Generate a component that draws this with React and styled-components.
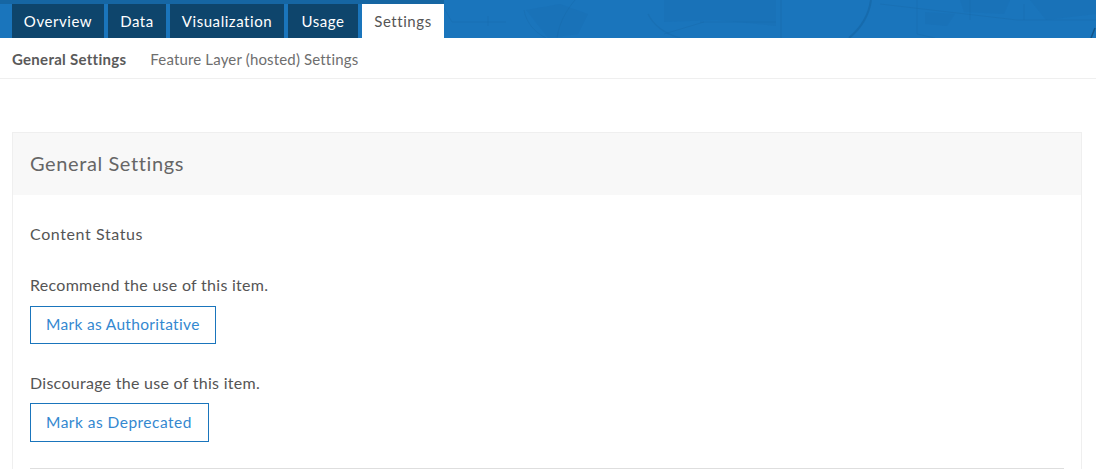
import React from "react";
import styled, { createGlobalStyle } from "styled-components";

const GlobalStyle = createGlobalStyle`
    html, body {
        margin: 0;
        padding: 0;
        background: #fff;
        overflow: hidden;
    }
    body {
        font-family: Lato, "Open Sans", sans-serif;
        color: #4c4c4c;
    }
`;

const Page = styled.div`
    width: 1096px;
    height: 476px;
    overflow: hidden;
`;

const Banner = styled.div`
    position: relative;
    height: 38px;
    background: #1a75bc;
    overflow: hidden;
`;

const BannerArt = styled.svg`
    position: absolute;
    top: 0;
    left: 0;
`;

const Tabs = styled.nav`
    position: relative;
    display: flex;
    gap: 4px;
    height: 38px;
    padding: 4px 0 0 12px;
    box-sizing: border-box;
`;

const Tab = styled.a`
    display: flex;
    align-items: center;
    justify-content: center;
    width: ${(props) => props.$width}px;
    font-size: 15px;
    letter-spacing: 0.55px;
    color: ${(props) => (props.$active ? "#555" : "#fff")};
    background: ${(props) => (props.$active ? "#fff" : "#0e456c")};
`;

const SubNav = styled.nav`
    display: flex;
    align-items: center;
    gap: 24px;
    height: 41px;
    padding: 1px 0 0 12px;
    box-sizing: border-box;
    border-bottom: 1px solid #efefef;
`;

const SubLink = styled.a`
    font-size: 15px;
    letter-spacing: ${(props) => (props.$active ? "0.28px" : "0.16px")};
    font-weight: ${(props) => (props.$active ? 700 : 400)};
    color: ${(props) => (props.$active ? "#5a5a5a" : "#6e6e6e")};
`;

const Card = styled.section`
    margin: 53px 14px 0 12px;
    border: 1px solid #efefef;
    border-bottom: 0;
`;

const CardHeader = styled.h2`
    margin: 0;
    height: 62px;
    padding: 0 0 2px 17px;
    box-sizing: border-box;
    display: flex;
    align-items: center;
    background: #f8f8f8;
    font-size: 20px;
    font-weight: 400;
    letter-spacing: 0.6px;
    color: #666;
`;

const CardBody = styled.div`
    padding: 28px 17px 0;
`;

const SectionTitle = styled.h3`
    margin: 0 0 29px;
    font-size: 16px;
    line-height: 22px;
    font-weight: 400;
    letter-spacing: 0.6px;
    color: #555;
`;

const StatusBlock = styled.div`
    margin-bottom: 28px;
    &:last-of-type {
        margin-bottom: 26px;
    }
`;

const Hint = styled.p`
    margin: 0 0 ${(props) => props.$gap}px;
    font-size: 16px;
    line-height: 22px;
    letter-spacing: 0.28px;
    color: #555;
`;

const OutlineButton = styled.button`
    display: block;
    width: ${(props) => props.$width}px;
    height: ${(props) => props.$height}px;
    padding: 0 0 2px 15px;
    text-align: left;
    background: #fff;
    border: 1px solid #1a75bc;
    border-radius: 0;
    font-family: inherit;
    font-size: 15.5px;
    letter-spacing: ${(props) => props.$spacing}px;
    color: #3488d0;
`;

const Divider = styled.hr`
    margin: 0;
    border: 0;
    border-top: 1px solid #dedede;
`;

const tabs = [
    { label: "Overview", width: 92 },
    { label: "Data", width: 58 },
    { label: "Visualization", width: 114 },
    { label: "Usage", width: 70 },
    { label: "Settings", width: 82, active: true },
];

const App = () => {
    return (
        <Page>
            <GlobalStyle />
            <Banner>
                <BannerArt width="1096" height="38" viewBox="0 0 1096 38" fill="none">
                    <path d="M0 0h444v4H0z" fill="#155f99" fillOpacity="0.7" />
                    <g fill="#176aab" fillOpacity="0.22">
                        <path d="M526 10l34-6 28 10-10 20-30 4z" />
                        <path d="M664 0h112v26l-60-6-52 2z" />
                        <path d="M925 12l30 2-8 12-22-2zM960 0h50l-6 14-40-2z" />
                        <path d="M1030 0h66v14l-50 6z" />
                    </g>
                    <g stroke="#1667a6" strokeOpacity="0.35" strokeWidth="1">
                        <path d="M444 8l8 14h54M488 16v10" />
                        <path d="M524 10c2 12 10 22 22 28" />
                        <path d="M575 0c-10 12-16 24-18 38" />
                        <path d="M648 14c6 12 18 20 32 24" strokeWidth="1.5" />
                        <path d="M700 22h76M664 34l40-12" />
                        <path d="M781 0v38" strokeWidth="1.5" />
                        <path d="M871 0c-2 14-10 28-22 38" strokeOpacity="0.7" strokeWidth="2" />
                        <path d="M880 4l137 16h79M917 0v34l18 4M970 0v20M1024 4v16" />
                    </g>
                    <path d="M1095 28l-4 10" stroke="#125488" strokeWidth="1.5" />
                </BannerArt>
                <Tabs>
                    {tabs.map((tab) => (
                        <Tab key={tab.label} $width={tab.width} $active={tab.active}>
                            {tab.label}
                        </Tab>
                    ))}
                </Tabs>
            </Banner>
            <SubNav>
                <SubLink $active>General Settings</SubLink>
                <SubLink>Feature Layer (hosted) Settings</SubLink>
            </SubNav>
            <Card>
                <CardHeader>General Settings</CardHeader>
                <CardBody>
                    <SectionTitle>Content Status</SectionTitle>
                    <StatusBlock>
                        <Hint $gap={10}>Recommend the use of this item.</Hint>
                        <OutlineButton $width={186} $height={38} $spacing={0.32}>
                            Mark as Authoritative
                        </OutlineButton>
                    </StatusBlock>
                    <StatusBlock>
                        <Hint $gap={9}>Discourage the use of this item.</Hint>
                        <OutlineButton $width={179} $height={39} $spacing={0.48}>
                            Mark as Deprecated
                        </OutlineButton>
                    </StatusBlock>
                    <Divider />
                </CardBody>
            </Card>
        </Page>
    );
};

export default App;
